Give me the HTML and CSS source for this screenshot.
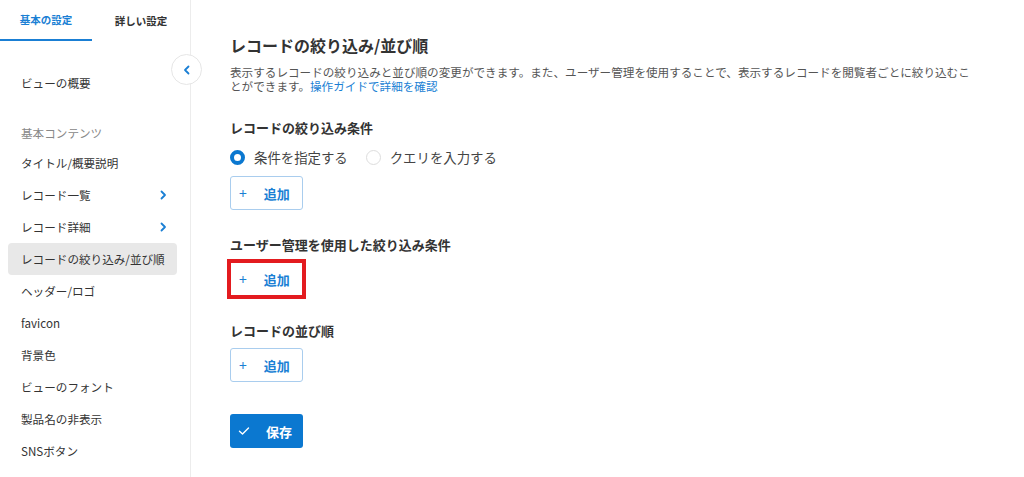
FILE: index.html
```html
<!DOCTYPE html>
<html lang="ja">

<head>
    <meta charset="UTF-8">
    <meta name="viewport" content="width=device-width, initial-scale=1.0">
    <title>ビューの設定</title>
    <link rel="stylesheet" href="styles.css">
</head>

<body>

    <!-- Side navigation -->
    <aside class="sidebar">
        <div class="tabs">
            <div class="tab active">基本の設定</div>
            <div class="tab">詳しい設定</div>
        </div>

        <button class="collapse-btn" type="button">
            <svg width="10" height="10" viewBox="0 0 10 10"><path d="M6.5 1.5 3 5l3.5 3.5" fill="none" stroke="#1a7fd4" stroke-width="1.8" stroke-linecap="round" stroke-linejoin="round"/></svg>
        </button>

        <nav class="menu">
            <a class="menu-item">ビューの概要</a>
            <div class="menu-group">基本コンテンツ</div>
            <a class="menu-item">タイトル/概要説明</a>
            <a class="menu-item has-sub">レコード一覧
                <svg width="8" height="10" viewBox="0 0 8 10"><path d="M2.5 1.5 6 5 2.5 8.5" fill="none" stroke="#1a7fd4" stroke-width="1.8" stroke-linecap="round" stroke-linejoin="round"/></svg>
            </a>
            <a class="menu-item has-sub">レコード詳細
                <svg width="8" height="10" viewBox="0 0 8 10"><path d="M2.5 1.5 6 5 2.5 8.5" fill="none" stroke="#1a7fd4" stroke-width="1.8" stroke-linecap="round" stroke-linejoin="round"/></svg>
            </a>
            <a class="menu-item selected">レコードの絞り込み/並び順</a>
            <a class="menu-item">ヘッダー/ロゴ</a>
            <a class="menu-item">favicon</a>
            <a class="menu-item">背景色</a>
            <a class="menu-item">ビューのフォント</a>
            <a class="menu-item">製品名の非表示</a>
            <a class="menu-item">SNSボタン</a>
        </nav>
    </aside>

    <!-- Settings panel -->
    <main class="content">
        <h1 class="page-title">レコードの絞り込み/並び順</h1>
        <p class="description">表示するレコードの絞り込みと並び順の変更ができます。また、ユーザー管理を使用することで、表示するレコードを閲覧者ごとに絞り込むことができます。<a class="guide-link">操作ガイドで詳細を確認</a></p>

        <section class="section">
            <h2 class="section-title">レコードの絞り込み条件</h2>
            <div class="radio-row">
                <label class="radio checked"><span class="radio-dot"></span>条件を指定する</label>
                <label class="radio"><span class="radio-dot"></span>クエリを入力する</label>
            </div>
            <button class="btn-add" type="button"><span class="plus">+</span>追加</button>
        </section>

        <section class="section">
            <h2 class="section-title">ユーザー管理を使用した絞り込み条件</h2>
            <button class="btn-add highlight" type="button"><span class="plus">+</span>追加</button>
        </section>

        <section class="section">
            <h2 class="section-title">レコードの並び順</h2>
            <button class="btn-add" type="button"><span class="plus">+</span>追加</button>
        </section>

        <button class="btn-save" type="button">
            <svg width="12" height="10" viewBox="0 0 12 10"><path d="M1.5 5.2 4.5 8 10.5 2" fill="none" stroke="#fff" stroke-width="1.4" stroke-linecap="round" stroke-linejoin="round"/></svg>
            保存
        </button>
    </main>

</body>

</html>
```

FILE: styles.css
```css
/* Global Styles */
body {
    font-family: "Noto Sans CJK JP", "Noto Sans", sans-serif;
    color: #333;
    background-color: white;
    margin: 0;
    padding: 0;
    display: flex;
    height: 100vh;
    overflow: hidden;
}

/* Sidebar */
.sidebar {
    position: relative;
    width: 190px;
    flex-shrink: 0;
    border-right: 1px solid #ececec;
}

.tabs {
    display: flex;
    height: 41px;
}

.tab {
    width: 92px;
    display: flex;
    justify-content: center;
    align-items: center;
    font-size: 10.5px;
    font-weight: bold;
    color: #333;
    box-sizing: border-box;
}

.tab + .tab {
    width: 98px;
}

.tab.active {
    color: #1a7fd4;
    border-bottom: 2px solid #1a7fd4;
}

.collapse-btn {
    position: absolute;
    top: 54px;
    left: 171px;
    width: 31px;
    height: 31px;
    border-radius: 50%;
    border: 1px solid #e6e6e6;
    background-color: white;
    padding: 0;
    display: flex;
    justify-content: center;
    align-items: center;
    cursor: pointer;
}

.menu {
    padding: 26px 13px 0 8px;
    display: flex;
    flex-direction: column;
}

.menu-item {
    height: 32px;
    display: flex;
    align-items: center;
    justify-content: space-between;
    padding: 0 10px 0 13px;
    font-size: 11.6px;
    color: #333;
    white-space: nowrap;
    border-radius: 4px;
    cursor: pointer;
}

.menu-item.selected {
    background-color: #e8e8e8;
}

.menu-group {
    height: 28px;
    margin-top: 20px;
    display: flex;
    align-items: center;
    padding-left: 13px;
    font-size: 11.6px;
    color: #888;
}

/* Main panel */
.content {
    flex: 1;
    padding: 33px 48px 0 39px;
}

.page-title {
    margin: 0;
    font-size: 16px;
    line-height: 24px;
    font-weight: bold;
}

.description {
    margin: 9px 0 0;
    font-size: 11.6px;
    line-height: 13.5px;
    color: #555;
}

.guide-link {
    color: #1a7fd4;
    cursor: pointer;
}

.section {
    margin-top: 26px;
}

.section-title {
    margin: 0 0 8px;
    font-size: 13px;
    line-height: 18px;
    font-weight: bold;
}

.radio-row {
    display: flex;
    gap: 18px;
    height: 20px;
    margin: 10px 0 9px;
}

.radio {
    display: flex;
    align-items: center;
    gap: 9px;
    font-size: 13.4px;
    color: #444;
}

.radio-dot {
    width: 15px;
    height: 15px;
    border-radius: 50%;
    border: 1px solid #ddd;
    box-sizing: border-box;
    background-color: white;
}

.radio.checked .radio-dot {
    border: 4px solid #0b78d0;
}

.btn-add,
.btn-save {
    width: 73px;
    height: 34px;
    display: flex;
    align-items: center;
    padding: 0 0 0 8px;
    font-family: inherit;
    font-size: 13px;
    font-weight: bold;
    border-radius: 3px;
    cursor: pointer;
}

.btn-add {
    color: #1a7fd4;
    background-color: white;
    border: 1px solid #a9cdee;
}

.plus {
    font-weight: normal;
    font-size: 14px;
    margin-right: 17px;
}

/* red box drawn round one button */
.highlight {
    border-radius: 0;
    outline: 4px solid #e31b1f;
    outline-offset: -1px;
}

.btn-save {
    margin-top: 32px;
    color: white;
    background-color: #0b78d0;
    border: none;
}

.btn-save svg {
    margin-right: 16px;
}
```
